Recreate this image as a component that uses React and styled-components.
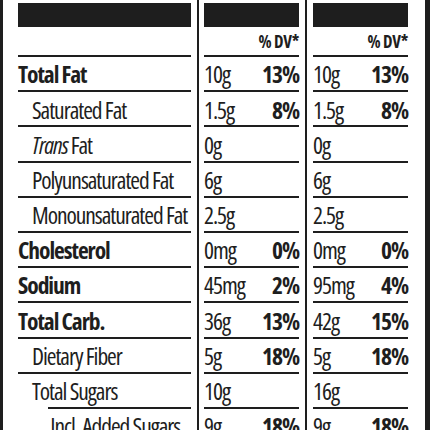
import React from "react";
import styled, { createGlobalStyle } from "styled-components";

const GlobalStyle = createGlobalStyle`
  body {
    margin: 0;
    background: #fff;
  }
`;

const INK = "#1e1e1e";

const Panel = styled.div`
  width: 430px;
  height: 430px;
  overflow: hidden;
  box-sizing: border-box;
  border-left: 3px solid ${INK};
  border-right: 5px solid ${INK};
  background: #fff;
  color: ${INK};
  font-family: "Open Sans", "Liberation Sans", sans-serif;
  font-stretch: 75%;
  font-size: 23.5px;
  letter-spacing: -1.05px;
`;

const Row = styled.div`
  display: grid;
  grid-template-columns: 196px 108px 118px;
`;

const Cell = styled.div`
  box-sizing: border-box;
  padding: ${p => (p.$pos === "left" ? "0 6px 0 15px" : p.$pos === "mid" ? "0 6px 0 5px" : "0 17px 0 6px")};
  border-right: ${p => (p.$pos === "right" ? "none" : `2px solid ${INK}`)};
`;

const Bar = styled.div`
  margin-top: 3px;
  height: 24px;
  background: ${INK};
`;

const DvLine = styled.div`
  height: 30px;
  border-bottom: 2px solid ${INK};
  display: flex;
  align-items: center;
  justify-content: flex-end;
  font-size: 17px;
  font-weight: 700;
  letter-spacing: -0.3px;
  padding-top: 1px;
  box-sizing: border-box;
`;

const Line = styled.div`
  position: relative;
  height: 30.2px;
  display: flex;
  align-items: center;
  justify-content: space-between;
  white-space: nowrap;
  padding-left: ${p => p.$indent * 14}px;
  padding-top: 3px;
  padding-bottom: 2px;
  box-sizing: content-box;
  &::after {
    content: "";
    position: absolute;
    left: ${p => p.$lineIndent || 0}px;
    right: 0;
    bottom: 0;
    height: 2px;
    background: ${INK};
  }
`;

const Label = styled.span`
  font-weight: ${p => (p.$bold ? 700 : 400)};
  line-height: 1;
`;

const Value = styled.span`
  line-height: 1;
`;

const Pct = styled.span`
  font-weight: 700;
  line-height: 1;
`;

const rows = [
  { label: "Total Fat", bold: true, a: ["10g", "13%"], b: ["10g", "13%"] },
  { label: "Saturated Fat", indent: 1, a: ["1.5g", "8%"], b: ["1.5g", "8%"] },
  { label: "Fat", trans: true, indent: 1, a: ["0g"], b: ["0g"] },
  { label: "Polyunsaturated Fat", indent: 1, a: ["6g"], b: ["6g"] },
  { label: "Monounsaturated Fat", indent: 1, a: ["2.5g"], b: ["2.5g"] },
  { label: "Cholesterol", bold: true, a: ["0mg", "0%"], b: ["0mg", "0%"] },
  { label: "Sodium", bold: true, a: ["45mg", "2%"], b: ["95mg", "4%"] },
  { label: "Total Carb.", bold: true, a: ["36g", "13%"], b: ["42g", "15%"] },
  { label: "Dietary Fiber", indent: 1, a: ["5g", "18%"], b: ["5g", "18%"] },
  { label: "Total Sugars", indent: 1, lineIndent: 30, a: ["10g"], b: ["16g"] },
  { label: "Incl. Added Sugars", indent: 2.3, a: ["9g", "18%"], b: ["9g", "18%"] },
  { label: "Protein", bold: true, a: ["2g"], b: ["3g"] },
];

function Amount({ data }) {
  return (
    <Line $indent={0}>
      <Value>{data[0]}</Value>
      {data[1] && <Pct>{data[1]}</Pct>}
    </Line>
  );
}

export default function App() {
  return (
    <Panel>
      <GlobalStyle />
      <Row>
        <Cell $pos="left">
          <Bar />
          <DvLine />
        </Cell>
        <Cell $pos="mid">
          <Bar />
          <DvLine>% DV*</DvLine>
        </Cell>
        <Cell $pos="right">
          <Bar />
          <DvLine>% DV*</DvLine>
        </Cell>
      </Row>
      {rows.map(r => (
        <Row key={r.label + (r.trans ? "t" : "")}>
          <Cell $pos="left">
            <Line $indent={r.indent || 0} $lineIndent={r.lineIndent}>
              <Label $bold={r.bold}>
                {r.trans && <i>Trans </i>}
                {r.label}
              </Label>
            </Line>
          </Cell>
          <Cell $pos="mid">
            <Amount data={r.a} />
          </Cell>
          <Cell $pos="right">
            <Amount data={r.b} />
          </Cell>
        </Row>
      ))}
    </Panel>
  );
}
